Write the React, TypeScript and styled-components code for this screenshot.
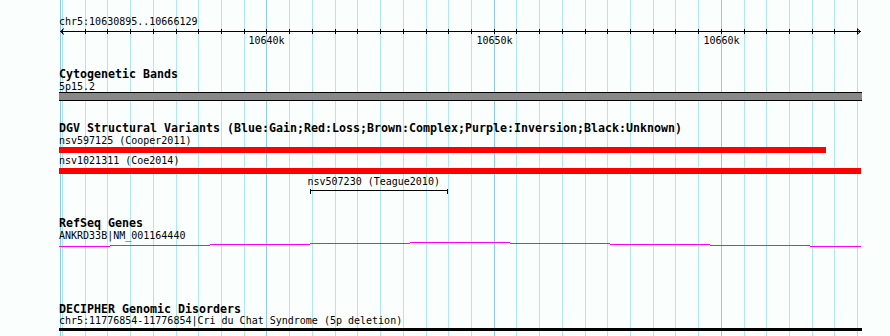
import React from "react";
import styled, { createGlobalStyle } from "styled-components";

/* ---------- coordinate system ---------- */
const VIEW_START = 10630895;
const VIEW_END = 10666129;
const REF_KB = 10631; // kb at which ORIGIN sits
const ORIGIN = 62.5; // px (page)
const PX_PER_KB = 22.72;
const TRACK_LEFT = 59;
const TRACK_WIDTH = 803;
const PAGE_W = 890;
const PAGE_H = 336;

const xAbs = (bp: number) => ORIGIN + (bp / 1000 - REF_KB) * PX_PER_KB;
const xRel = (bp: number) => xAbs(bp) - TRACK_LEFT;
const clampRel = (bp: number) =>
  Math.max(0, Math.min(TRACK_WIDTH, xRel(Math.max(VIEW_START, Math.min(VIEW_END, bp)))));

const ticksKb: number[] = [];
for (let k = 10631; k <= 10666; k++) ticksKb.push(k);
const majorKb = ticksKb.filter((k) => k % 10 === 0);

/* ---------- styles ---------- */
const GlobalStyle = createGlobalStyle`
  html, body { margin: 0; padding: 0; background: #fafefc; }
  body { font-family: "DejaVu Sans Mono", "Liberation Mono", monospace; color: #000; }
`;

const Page = styled.div`
  position: relative;
  width: ${PAGE_W}px;
  height: ${PAGE_H}px;
  overflow: hidden;
  background: #fafefc;
`;

const GridLayer = styled.svg`
  position: absolute;
  left: 0;
  top: 0;
  z-index: 0;
  shape-rendering: crispEdges;
`;

const Tracks = styled.div`
  position: relative;
  z-index: 1;
  display: flex;
  flex-direction: column;
  margin-left: ${TRACK_LEFT}px;
  width: ${TRACK_WIDTH}px;
`;

const Ruler = styled.div`
  display: flex;
  flex-direction: column;
  padding-top: 16px;
`;

const Mono = styled.div`
  font-family: "DejaVu Sans Mono", "Liberation Mono", monospace;
  font-size: 10px;
  line-height: 12px;
  white-space: pre;
`;

const Location = styled(Mono)``;

const AxisSvg = styled.svg`
  display: block;
  shape-rendering: crispEdges;
`;

const TickLabels = styled.div`
  position: relative;
  height: 12px;
`;

const TickLabel = styled(Mono)`
  position: absolute;
  top: 0;
  transform: translateX(-50%);
`;

const Track = styled.section<{ $gap: number }>`
  display: flex;
  flex-direction: column;
  margin-top: ${(p) => p.$gap}px;
`;

const TrackTitle = styled.div`
  font-family: "DejaVu Sans Mono", "Liberation Mono", monospace;
  font-weight: bold;
  font-size: 11.63px;
  line-height: 13px;
  white-space: pre;
`;

const FeatureLabel = styled(Mono)<{ $gap?: number }>`
  margin-top: ${(p) => p.$gap ?? 0}px;
`;

const Bar = styled.div<{ $color: string; $height: number; $gap?: number; $outlined?: boolean }>`
  height: ${(p) => p.$height}px;
  margin-top: ${(p) => p.$gap ?? 0}px;
  background: ${(p) => p.$color};
  box-sizing: border-box;
  ${(p) => (p.$outlined ? "border-top: 1px solid #000; border-bottom: 1px solid #000;" : "")}
`;

const FeatureSvg = styled.svg`
  display: block;
  shape-rendering: crispEdges;
`;

/* ---------- data ---------- */
const dgv = [
  { name: "nsv597125 (Cooper2011)", start: 10600000, end: 10664604 },
  { name: "nsv1021311 (Coe2014)", start: 10600000, end: 10700000 },
];
const teague = { name: "nsv507230 (Teague2010)", start: 10641893, end: 10647923 };

// stepped gene line (page x breakpoints, y rows)
const geneSteps: { x0: number; x1: number; y: number }[] = [
  { x0: 59, x1: 110, y: 246 },
  { x0: 110, x1: 210, y: 245 },
  { x0: 210, x1: 310, y: 244 },
  { x0: 310, x1: 410, y: 243 },
  { x0: 410, x1: 510, y: 242 },
  { x0: 510, x1: 610, y: 243 },
  { x0: 610, x1: 710, y: 244 },
  { x0: 710, x1: 810, y: 245 },
  { x0: 810, x1: 861, y: 246 },
];

/* ---------- components ---------- */
function Grid() {
  return (
    <GridLayer width={PAGE_W} height={PAGE_H}>
      <rect x={60} y={0} width={1} height={PAGE_H} fill="#8ecaec" />
      {ticksKb.map((k) => (
        <rect
          key={k}
          x={Math.floor(xAbs(k * 1000))}
          y={0}
          width={1}
          height={PAGE_H}
          fill={k % 10 === 0 ? "#8ecaec" : "#aee8ee"}
        />
      ))}
    </GridLayer>
  );
}

function Axis() {
  return (
    <AxisSvg width={TRACK_WIDTH} height={7}>
      <rect x={1} y={3} width={801} height={1} fill="#000" />
      {ticksKb.map((k) => (
        <rect key={k} x={Math.floor(xAbs(k * 1000)) - TRACK_LEFT} y={1} width={1} height={5} fill="#000" />
      ))}
      <polyline points="5,0.5 1.5,3.5 5,6.5" fill="none" stroke="#000" strokeWidth={1} shapeRendering="auto" />
      <polyline points="798,0.5 801.5,3.5 798,6.5" fill="none" stroke="#000" strokeWidth={1} shapeRendering="auto" />
    </AxisSvg>
  );
}

export default function App() {
  const tStart = clampRel(teague.start);
  const tEnd = clampRel(teague.end);
  return (
    <Page>
      <GlobalStyle />
      <Grid />
      <Tracks>
        <Ruler>
          <Location>chr5:10630895..10666129</Location>
          <Axis />
          <TickLabels>
            {majorKb.map((k) => (
              <TickLabel key={k} style={{ left: Math.floor(xRel(k * 1000)) + 0.5 }}>
                {k}k
              </TickLabel>
            ))}
          </TickLabels>
        </Ruler>

        <Track $gap={21}>
          <TrackTitle>Cytogenetic Bands</TrackTitle>
          <FeatureLabel>5p15.2</FeatureLabel>
          <Bar $color="#888888" $height={9} $gap={-1} $outlined />
        </Track>

        <Track $gap={21}>
          <TrackTitle>
            DGV Structural Variants (Blue:Gain;Red:Loss;Brown:Complex;Purple:Inversion;Black:Unknown)
          </TrackTitle>
          <FeatureLabel>{dgv[0].name}</FeatureLabel>
          <Bar $color="#ff0000" $height={6} style={{ width: clampRel(dgv[0].end) }} />
          <FeatureLabel $gap={2}>{dgv[1].name}</FeatureLabel>
          <Bar $color="#ff0000" $height={6} $gap={1} style={{ width: TRACK_WIDTH - 1 }} />
          <FeatureLabel $gap={2} style={{ marginLeft: tStart - 2.5 }}>
            {teague.name}
          </FeatureLabel>
          <FeatureSvg width={TRACK_WIDTH} height={7}>
            <rect x={Math.round(tStart)} y={2} width={Math.round(tEnd - tStart)} height={1} fill="#000" />
            <rect x={Math.round(tStart)} y={1} width={1} height={5} fill="#000" />
            <rect x={Math.round(tEnd)} y={1} width={1} height={5} fill="#000" />
          </FeatureSvg>
        </Track>

        <Track $gap={22}>
          <TrackTitle>RefSeq Genes</TrackTitle>
          <FeatureLabel>ANKRD33B|NM_001164440</FeatureLabel>
          <FeatureSvg width={TRACK_WIDTH} height={6}>
            {geneSteps.map((s) => (
              <rect
                key={s.x0}
                x={s.x0 - TRACK_LEFT}
                y={s.y - 242}
                width={s.x1 - s.x0}
                height={1}
                fill="#ff00ff"
              />
            ))}
          </FeatureSvg>
        </Track>

        <Track $gap={55}>
          <TrackTitle>DECIPHER Genomic Disorders</TrackTitle>
          <FeatureLabel $gap={-1}>chr5:11776854-11776854|Cri du Chat Syndrome (5p deletion)</FeatureLabel>
          <Bar $color="#000000" $height={3} $gap={1} />
        </Track>
      </Tracks>
    </Page>
  );
}
